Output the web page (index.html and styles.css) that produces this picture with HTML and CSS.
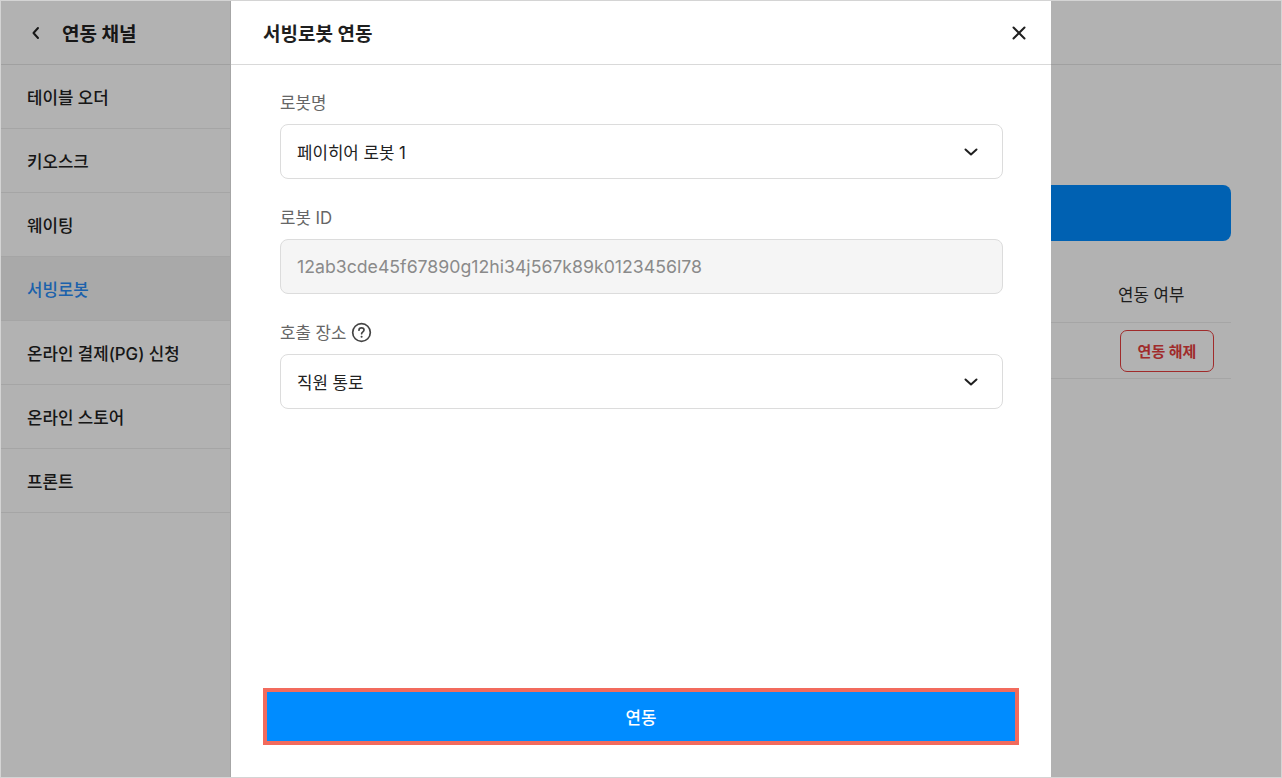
FILE: index.html
```html
<!DOCTYPE html>
<html lang="ko">
<head>
<meta charset="utf-8">
<title>서빙로봇 연동</title>
<link rel="stylesheet" href="styles.css">
</head>
<body>
<div class="app">
  <aside class="sidebar">
    <div class="side-head">
      <svg class="back" width="10" height="14" viewBox="0 0 10 14"><path d="M7 2 L2.5 7 L7 12" fill="none" stroke="#222" stroke-width="2" stroke-linecap="round" stroke-linejoin="round"/></svg>
      <span>연동 채널</span>
    </div>
    <ul class="menu">
      <li>테이블 오더</li>
      <li>키오스크</li>
      <li>웨이팅</li>
      <li class="active">서빙로봇</li>
      <li>온라인 결제(PG) 신청</li>
      <li>온라인 스토어</li>
      <li>프론트</li>
    </ul>
  </aside>
  <main class="main">
    <div class="main-head"></div>
    <div class="content">
      <button class="add-btn" type="button"></button>
      <div class="table">
        <div class="row head">
          <div></div>
          <div></div>
          <div>연동 여부</div>
        </div>
        <div class="row body">
          <div></div>
          <div></div>
          <div><button class="unlink" type="button">연동 해제</button></div>
        </div>
      </div>
    </div>
  </main>

  <div class="overlay"></div>

  <section class="modal">
    <header class="modal-head">
      <h1>서빙로봇 연동</h1>
      <svg class="close" width="16" height="16" viewBox="0 0 16 16"><path d="M2.5 2.5 L13.5 13.5 M13.5 2.5 L2.5 13.5" stroke="#1f1f1f" stroke-width="2" stroke-linecap="round"/></svg>
    </header>
    <div class="modal-body">
      <div class="field">
        <label>로봇명</label>
        <div class="box select">
          <span>페이히어 로봇 1</span>
          <svg class="chev" width="14" height="8" viewBox="0 0 14 8"><path d="M1.5 1.5 L7 6.5 L12.5 1.5" fill="none" stroke="#1f1f1f" stroke-width="2" stroke-linecap="round" stroke-linejoin="round"/></svg>
        </div>
      </div>
      <div class="field">
        <label>로봇 ID</label>
        <div class="box disabled"><span>12ab3cde45f67890g12hi34j567k89k0123456l78</span></div>
      </div>
      <div class="field">
        <label>호출 장소
          <svg class="help" width="21" height="21" viewBox="0 0 20 20"><circle cx="10" cy="10" r="8.4" fill="none" stroke="#444" stroke-width="1.6"/><path d="M7.6 7.8 C7.6 6.4 8.7 5.6 10 5.6 C11.4 5.6 12.4 6.5 12.4 7.7 C12.4 9.3 10.1 9.4 10.1 11.2" fill="none" stroke="#444" stroke-width="1.6" stroke-linecap="round"/><circle cx="10.1" cy="14" r="1" fill="#444"/></svg>
        </label>
        <div class="box select">
          <span>직원 통로</span>
          <svg class="chev" width="14" height="8" viewBox="0 0 14 8"><path d="M1.5 1.5 L7 6.5 L12.5 1.5" fill="none" stroke="#1f1f1f" stroke-width="2" stroke-linecap="round" stroke-linejoin="round"/></svg>
        </div>
      </div>
    </div>
    <footer class="modal-foot">
      <button class="submit" type="button">연동</button>
    </footer>
  </section>
</div>
</body>
</html>
```

FILE: styles.css
```css
* { box-sizing: border-box; }

html, body {
  margin: 0;
  padding: 0;
  background: #ffffff;
}

body {
  font-family: "Inter", "Noto Sans CJK KR", sans-serif;
  color: #222222;
}

.app {
  position: relative;
  width: 1282px;
  height: 778px;
  border: 1px solid #d4d4d4;
  display: flex;
  overflow: hidden;
  background: #ffffff;
}

/* ---------- sidebar ---------- */
.sidebar {
  width: 230px;
  flex: none;
  display: flex;
  flex-direction: column;
  border-right: 1px solid #eeeeee;
}

.side-head {
  height: 64px;
  display: flex;
  align-items: center;
  gap: 21px;
  padding-left: 30px;
  border-bottom: 1px solid #e6e6e6;
  font-size: 19px;
  font-weight: 700;
  color: #222222;
}

.menu {
  list-style: none;
  margin: 0;
  padding: 0;
}

.menu li {
  height: 64px;
  display: flex;
  align-items: center;
  padding-left: 26px;
  border-bottom: 1px solid #ececec;
  font-size: 16.8px;
  font-weight: 500;
  color: #222222;
}

.menu li.active {
  background: #f3f3f3;
  color: #2a8cf5;
}

/* ---------- main ---------- */
.main {
  flex: 1;
  display: flex;
  flex-direction: column;
}

.main-head {
  height: 64px;
  border-bottom: 1px solid #e6e6e6;
}

.content {
  padding: 120px 50px 0 48px;
  display: flex;
  flex-direction: column;
}

.add-btn {
  height: 56px;
  border: none;
  border-radius: 8px;
  background: #008cff;
}

.table {
  margin-top: 24px;
}

.row {
  display: grid;
  grid-template-columns: 1fr 1fr 129px;
  height: 56px;
  align-items: center;
  border-bottom: 1px solid #ececec;
}

.row > div {
  padding-left: 16px;
}

.row.head {
  height: 58px;
  font-size: 16.8px;
  color: #2b2b2b;
}

.row.body > div {
  padding-left: 18px;
}

.unlink {
  height: 42px;
  width: 94px;
  border: 1px solid #e53e3e;
  border-radius: 7px;
  background: #ffffff;
  color: #e53e3e;
  font-family: inherit;
  font-size: 15px;
  font-weight: 700;
}

/* ---------- overlay ---------- */
.overlay {
  position: absolute;
  inset: -1px;
  background: rgba(0, 0, 0, 0.3);
}

/* ---------- modal ---------- */
.modal {
  position: absolute;
  left: 230px;
  top: -1px;
  width: 820px;
  height: 778px;
  background: #ffffff;
  border-top: 1px solid #e0e0e0;
  border-bottom: 1px solid #e0e0e0;
  display: flex;
  flex-direction: column;
}

.modal-head {
  height: 64px;
  flex: none;
  display: flex;
  align-items: center;
  justify-content: space-between;
  padding: 0 24px 0 32px;
  border-bottom: 1px solid #d9d9d9;
}

.modal-head h1 {
  margin: 0;
  font-size: 19px;
  font-weight: 700;
  color: #1f1f1f;
}

.modal-body {
  flex: 1;
  padding: 25px 48px 0 49px;
  display: flex;
  flex-direction: column;
  gap: 26px;
}

.field {
  display: flex;
  flex-direction: column;
  gap: 10px;
}

.field label {
  display: flex;
  align-items: center;
  gap: 5px;
  height: 24px;
  font-size: 16.8px;
  color: #666666;
}

.box {
  height: 55px;
  border: 1px solid #dcdcdc;
  border-radius: 8px;
  display: flex;
  align-items: center;
  justify-content: space-between;
  padding: 0 24px 0 16px;
  font-size: 16.8px;
  color: #222222;
}

.box.disabled {
  background: #f5f5f5;
  color: #8a8a8a;
  font-size: 17.7px;
}

.modal-foot {
  padding: 0 32px 32px 32px;
}

.submit {
  display: block;
  width: 100%;
  height: 57px;
  border: 4px solid #f26b5d;
  background: #008cff;
  color: #ffffff;
  font-family: inherit;
  font-size: 16.8px;
  font-weight: 500;
}
```
